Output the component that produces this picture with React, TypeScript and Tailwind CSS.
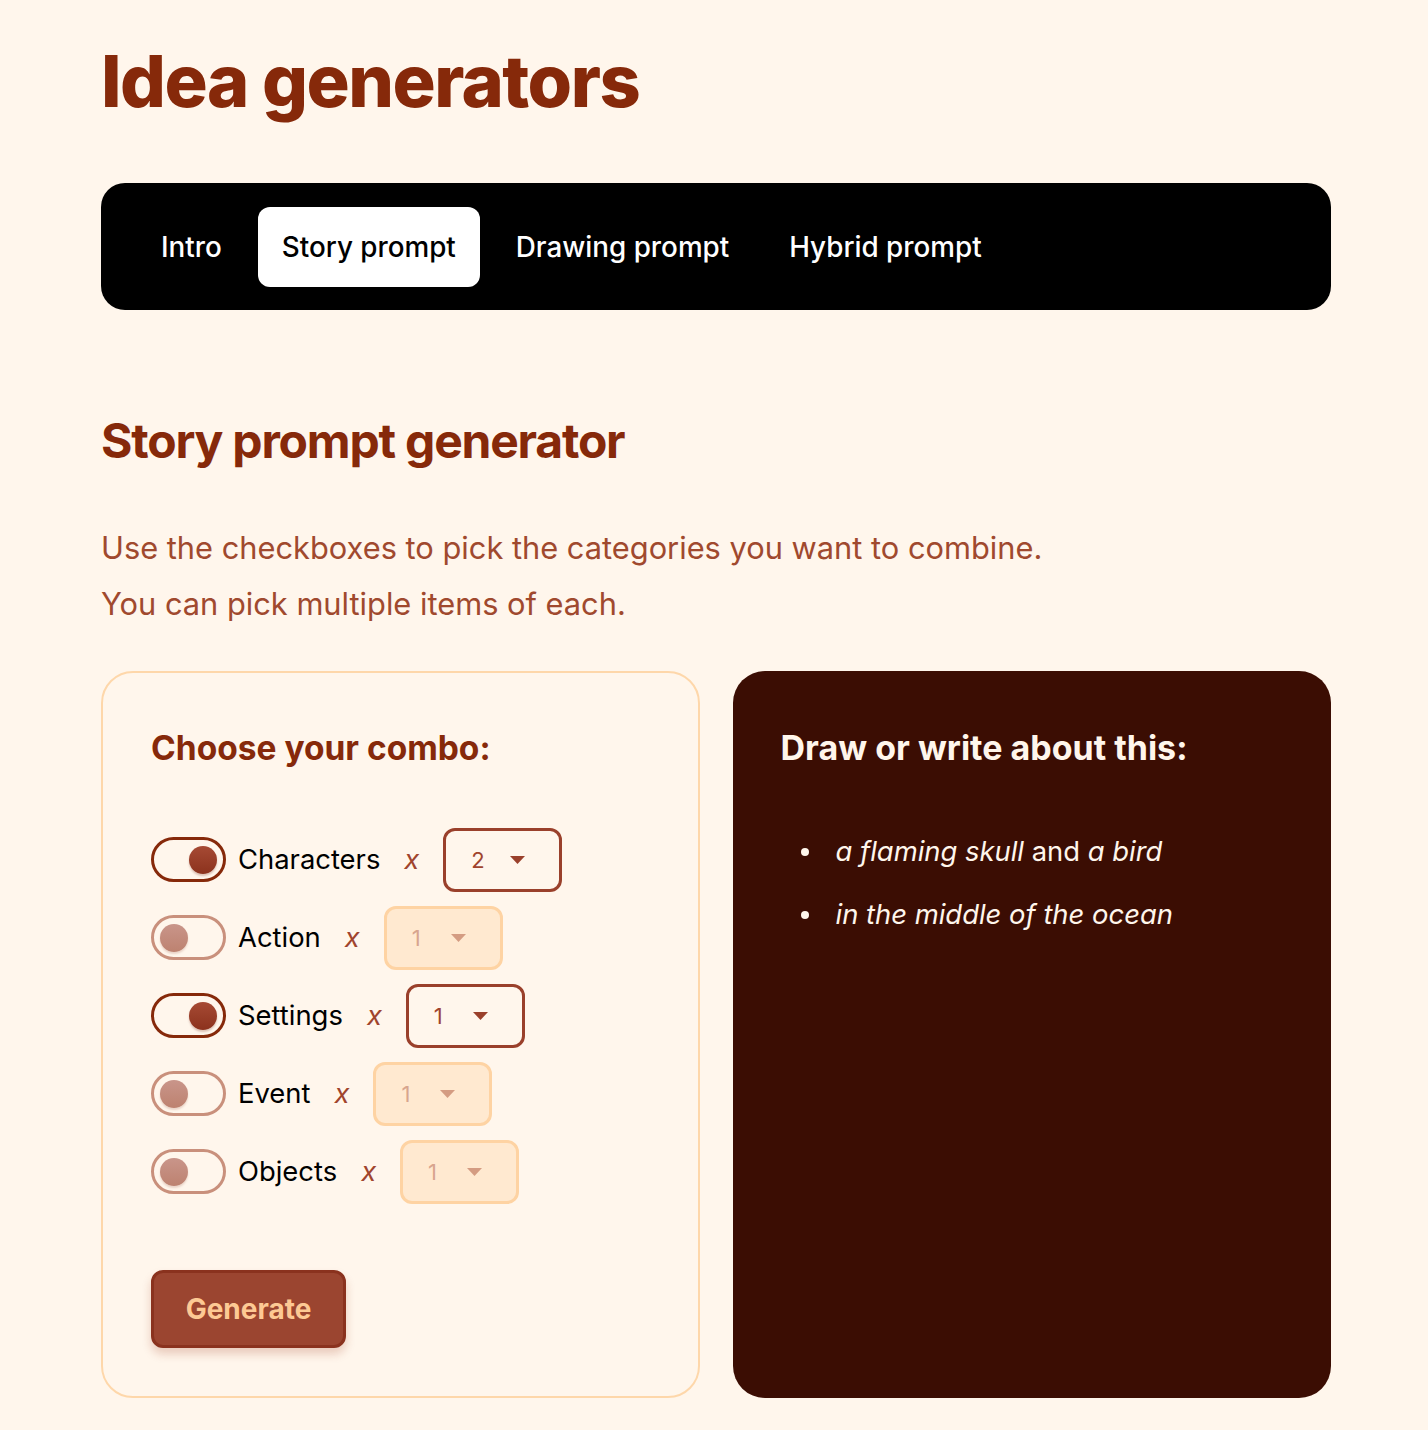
import { useState } from "react";

type Category = {
    name: string;
    on: boolean;
    count: number;
};

const initialCategories: Category[] = [
    { name: "Characters", on: true, count: 2 },
    { name: "Action", on: false, count: 1 },
    { name: "Settings", on: true, count: 1 },
    { name: "Event", on: false, count: 1 },
    { name: "Objects", on: false, count: 1 },
];

const tabs = ["Intro", "Story prompt", "Drawing prompt", "Hybrid prompt"];

function Toggle({ on, onClick }: { on: boolean; onClick: () => void }) {
    return (
        <button
            type="button"
            onClick={onClick}
            className={
                on
                    ? "flex h-[45px] w-[75px] shrink-0 items-center justify-end rounded-full border-[3px] border-[#86290a] pr-[6px]"
                    : "flex h-[45px] w-[75px] shrink-0 items-center justify-start rounded-full border-[3px] border-[#c9907c] pl-[6px]"
            }
        >
            <span
                className={
                    on
                        ? "block h-[28px] w-[28px] rounded-full bg-linear-to-b from-[#a64a34] to-[#8c321d] shadow-[0_2px_2px_rgba(120,40,20,0.25)]"
                        : "block h-[28px] w-[28px] rounded-full bg-linear-to-b from-[#c9958a] to-[#bd8270] shadow-[0_2px_2px_rgba(150,80,60,0.2)]"
                }
            />
        </button>
    );
}

function CountSelect({ value, enabled }: { value: number; enabled: boolean }) {
    return (
        <div
            className={
                enabled
                    ? "flex h-16 w-[119px] shrink-0 items-center rounded-xl border-[3px] border-[#9a402b] pl-[25px] text-[22px] text-[#a0442d]"
                    : "flex h-16 w-[119px] shrink-0 items-center rounded-xl border-[3px] border-[#fed3a3] bg-[#ffe9d0] pl-[25px] text-[22px] text-[#d8a58e]"
            }
        >
            <span className="w-[13px] leading-none">{value}</span>
            <svg width="15" height="8" viewBox="0 0 15 8" className="ml-[26px]">
                <path d="M0 0 L15 0 L7.5 8 Z" fill={enabled ? "#9a402b" : "#d49c82"} />
            </svg>
        </div>
    );
}

export default function App() {
    const [categories, setCategories] = useState(initialCategories);

    const flip = (i: number) =>
        setCategories(categories.map((c, j) => (j === i ? { ...c, on: !c.on } : c)));

    return (
        <div className="min-h-[1430px] bg-[#fff6ec] font-['Inter','Noto_Sans',sans-serif] pb-8">
            <div className="ml-[101px] w-[1230px] pt-[45px]">
                <h1 className="text-[72px] font-extrabold leading-none tracking-[-0.021em] text-[#86290a]">
                    Idea generators
                </h1>

                <nav className="mt-[66px] flex h-[127px] items-start gap-3 rounded-3xl bg-black pl-9 pt-6">
                    {tabs.map((t) => (
                        <span
                            key={t}
                            className={
                                t === "Story prompt"
                                    ? "rounded-xl bg-white px-6 py-6 text-[27.8px] font-medium leading-8 text-black"
                                    : "rounded-xl px-6 py-6 text-[27.8px] font-medium leading-8 text-white"
                            }
                        >
                            {t}
                        </span>
                    ))}
                </nav>

                <h2 className="mt-[107px] text-[48px] font-bold leading-none tracking-[-0.025em] text-[#86290a]">
                    Story prompt generator
                </h2>

                <div className="mt-[55px] text-[30.8px] leading-[56px] text-[#a0492e]">
                    <p>Use the checkboxes to pick the categories you want to combine.</p>
                    <p>You can pick multiple items of each.</p>
                </div>

                <div className="mt-[39px] grid grid-cols-2 gap-[33px]">
                    <section className="h-[727px] rounded-[32px] border-2 border-[#fed7aa] px-12 pt-[59px]">
                        <h3 className="text-[33.5px] font-bold leading-none text-[#86290a]">
                            Choose your combo:
                        </h3>
                        <div className="mt-[62px] flex flex-col gap-[14px]">
                            {categories.map((c, i) => (
                                <div key={c.name} className="flex h-16 items-center">
                                    <Toggle on={c.on} onClick={() => flip(i)} />
                                    <span className="ml-3 text-[27.4px] leading-none text-black">{c.name}</span>
                                    <span className="ml-6 text-[27.4px] italic leading-none text-[#a0442d]">x</span>
                                    <div className="ml-6">
                                        <CountSelect value={c.count} enabled={c.on} />
                                    </div>
                                </div>
                            ))}
                        </div>
                        <button
                            type="button"
                            className="mt-[66px] h-[78px] w-[195px] rounded-xl border-[3px] border-[#8a321e] bg-[#9b4530] text-[28px] font-bold text-[#fdc994] shadow-[0_6px_10px_rgba(154,52,18,0.22)]"
                        >
                            Generate
                        </button>
                    </section>

                    <section className="h-[727px] rounded-[32px] bg-[#3b0d03] px-12 pt-[60px]">
                        <h3 className="text-[34px] font-bold leading-none text-[#fff6ec]">
                            Draw or write about this:
                        </h3>
                        <ul className="mt-[55px] flex flex-col text-[27.4px] leading-[63px] text-[#fff6ec]">
                            <li className="flex items-center">
                                <span className="ml-[20px] h-[8px] w-[8px] rounded-full bg-[#fff6ec]" />
                                <span className="ml-[27px]">
                                    <em>a flaming skull</em> and <em>a bird</em>
                                </span>
                            </li>
                            <li className="flex items-center">
                                <span className="ml-[20px] h-[8px] w-[8px] rounded-full bg-[#fff6ec]" />
                                <span className="ml-[27px]">
                                    <em>in the middle of the ocean</em>
                                </span>
                            </li>
                        </ul>
                    </section>
                </div>
            </div>
        </div>
    );
}
